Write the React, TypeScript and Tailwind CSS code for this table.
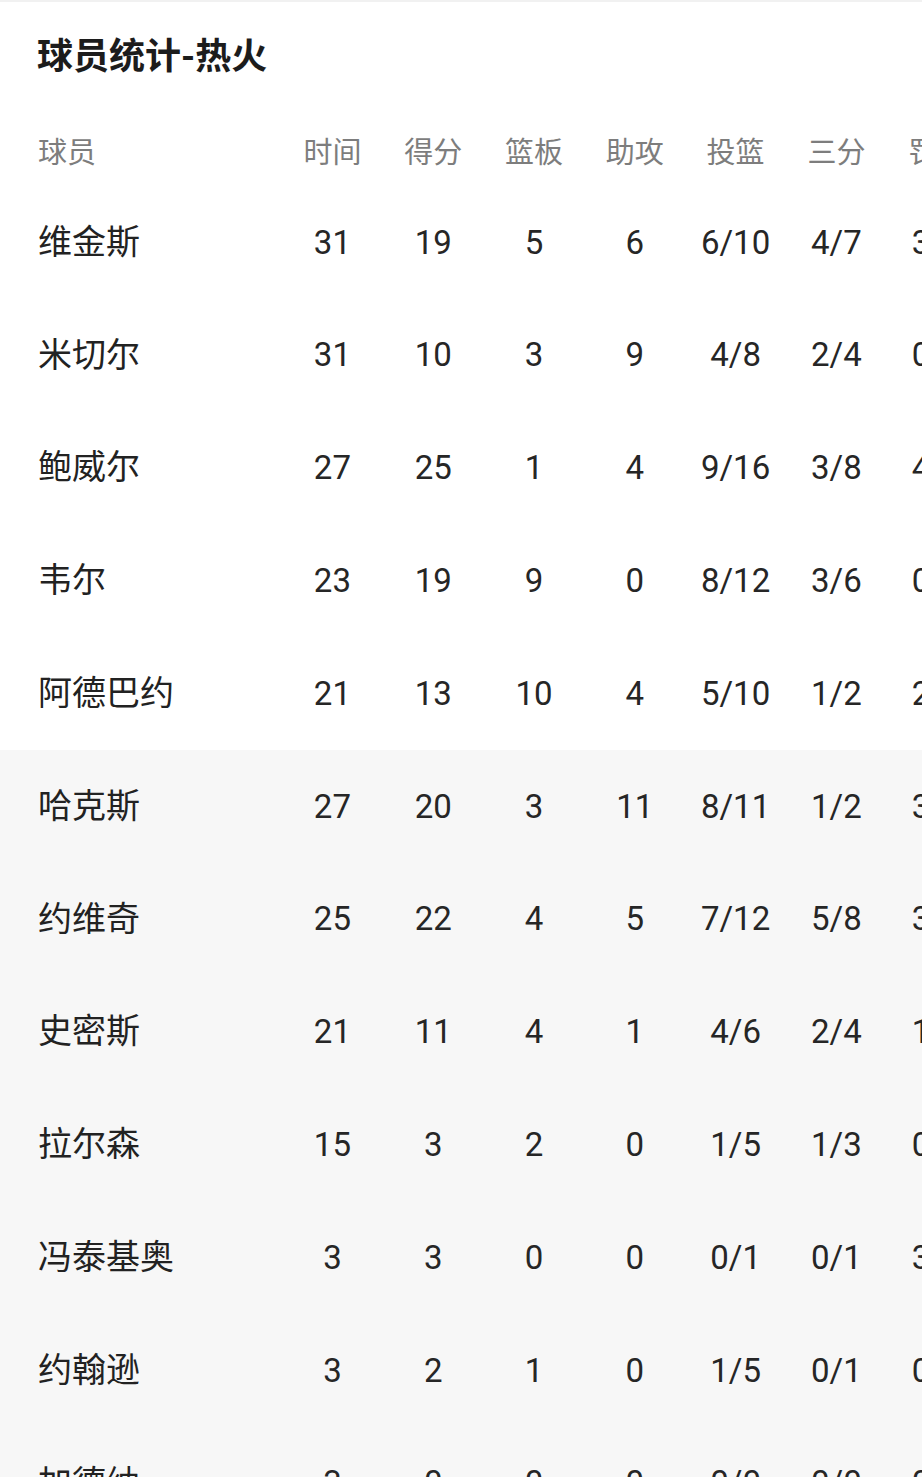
type PlayerLine = {
  name: string;
  min: string;
  pts: string;
  reb: string;
  ast: string;
  fg: string;
  tp: string;
  ft: string;
  bench?: boolean;
};

const COLUMNS = ["时间", "得分", "篮板", "助攻", "投篮", "三分", "罚球"];

const PLAYERS: PlayerLine[] = [
  { name: "维金斯", min: "31", pts: "19", reb: "5", ast: "6", fg: "6/10", tp: "4/7", ft: "3/4" },
  { name: "米切尔", min: "31", pts: "10", reb: "3", ast: "9", fg: "4/8", tp: "2/4", ft: "0/0" },
  { name: "鲍威尔", min: "27", pts: "25", reb: "1", ast: "4", fg: "9/16", tp: "3/8", ft: "4/4" },
  { name: "韦尔", min: "23", pts: "19", reb: "9", ast: "0", fg: "8/12", tp: "3/6", ft: "0/0" },
  { name: "阿德巴约", min: "21", pts: "13", reb: "10", ast: "4", fg: "5/10", tp: "1/2", ft: "2/2" },
  { name: "哈克斯", min: "27", pts: "20", reb: "3", ast: "11", fg: "8/11", tp: "1/2", ft: "3/3", bench: true },
  { name: "约维奇", min: "25", pts: "22", reb: "4", ast: "5", fg: "7/12", tp: "5/8", ft: "3/3", bench: true },
  { name: "史密斯", min: "21", pts: "11", reb: "4", ast: "1", fg: "4/6", tp: "2/4", ft: "1/2", bench: true },
  { name: "拉尔森", min: "15", pts: "3", reb: "2", ast: "0", fg: "1/5", tp: "1/3", ft: "0/0", bench: true },
  { name: "冯泰基奥", min: "3", pts: "3", reb: "0", ast: "0", fg: "0/1", tp: "0/1", ft: "3/4", bench: true },
  { name: "约翰逊", min: "3", pts: "2", reb: "1", ast: "0", fg: "1/5", tp: "0/1", ft: "0/0", bench: true },
  { name: "加德纳", min: "3", pts: "0", reb: "0", ast: "0", fg: "0/0", tp: "0/0", ft: "0/0", bench: true },
];

export default function App() {
  return (
    <div
      className="h-screen w-full overflow-hidden bg-white border-t-2 border-[#f1f1f1]"
      style={{ fontFamily: "Roboto, 'Noto Sans CJK SC', sans-serif" }}
    >
      {/* title */}
      <h1 className="pl-[37px] pt-[29px] h-[119px] text-[36px] leading-[52px] font-bold text-[#1c1c1c]">
        球员统计-热火
      </h1>

      {/* header */}
      <div className="flex h-[65px] items-center text-[29px] text-[#7d7d7d] whitespace-nowrap">
        <div className="w-[282px] shrink-0 pl-[38px]">球员</div>
        {COLUMNS.map((c) => (
          <div key={c} className="w-[100.8px] shrink-0 text-center">
            {c}
          </div>
        ))}
      </div>

      {/* rows */}
      {PLAYERS.map((p) => (
        <div
          key={p.name}
          className={`flex h-[112.8px] items-center whitespace-nowrap text-[#222222] ${
            p.bench ? "bg-[#f7f7f7]" : "bg-white"
          }`}
        >
          <div className="w-[282px] shrink-0 pl-[38px] text-[34px]">{p.name}</div>
          {[p.min, p.pts, p.reb, p.ast, p.fg, p.tp, p.ft].map((v, i) => (
            <div key={i} className="w-[100.8px] shrink-0 text-center text-[33px] text-[#262626]">
              {v}
            </div>
          ))}
        </div>
      ))}
    </div>
  );
}
